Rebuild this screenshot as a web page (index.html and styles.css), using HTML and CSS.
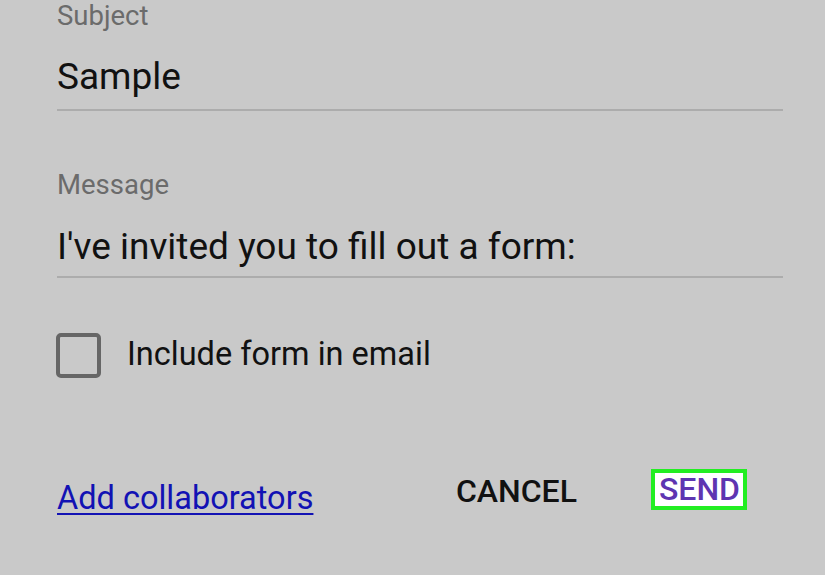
FILE: index.html
```html
<!DOCTYPE html>
<html lang="en">
<head>
<meta charset="utf-8">
<title>Send form</title>
<link rel="stylesheet" href="styles.css">
</head>
<body>
<div class="dialog">
  <div class="field field-subject">
    <div class="label">Subject</div>
    <div class="value">Sample</div>
  </div>
  <div class="field field-message">
    <div class="label">Message</div>
    <div class="value">I've invited you to fill out a form:</div>
  </div>
  <label class="check">
    <span class="box"></span>
    <span class="check-text">Include form in email</span>
  </label>
  <div class="actions">
    <a class="collab" href="#">Add collaborators</a>
    <div class="buttons">
      <span class="btn cancel">CANCEL</span>
      <span class="btn send">SEND</span>
    </div>
  </div>
</div>
</body>
</html>
```
FILE: styles.css
```css
html, body {
  margin: 0;
  padding: 0;
  background: #c9c9c9;
  width: 825px;
  height: 575px;
  overflow: hidden;
  font-family: Roboto, "Liberation Sans", sans-serif;
}

.dialog {
  padding: 0 42px 0 57px;
  display: flex;
  flex-direction: column;
}

.field {
  border-bottom: 2px solid #acacac;
}

.label {
  font-size: 27.5px;
  color: #6b6b6b;
  line-height: 32px;
}

.value {
  font-size: 37px;
  color: #111;
  line-height: 44px;
}

.field-subject .label {
  margin-bottom: 23px;
}
.field-subject .value {
  padding-bottom: 10px;
}

.field-message {
  margin-top: 58px;
}
.field-message .label {
  margin-bottom: 24px;
}
.field-message .value {
  padding-bottom: 7px;
}

.check {
  display: flex;
  align-items: center;
  gap: 26px;
  margin-top: 55px;
  margin-left: -1px;
}

.box {
  width: 37px;
  height: 37px;
  border: 4px solid #666;
  border-radius: 5px;
}

.check-text {
  font-size: 32.5px;
  line-height: 38px;
  color: #111;
  margin-bottom: 3px;
}

.actions {
  display: flex;
  align-items: flex-start;
  justify-content: space-between;
  margin-top: 91px;
  margin-right: 36px;
}

.collab {
  font-size: 32.5px;
  line-height: 38px;
  color: #1212b4;
  text-decoration: underline;
  text-decoration-thickness: 2px;
  text-underline-offset: 4px;
  margin-top: 10px;
}

.buttons {
  display: flex;
  align-items: flex-start;
  gap: 74px;
}

.btn {
  font-size: 32px;
  font-weight: 500;
  line-height: 33px;
}

.cancel {
  color: #111;
  margin-top: 6px;
}

.send {
  color: #5e35b1;
  background: #fff;
  border: 4px solid #22ee22;
  padding: 0 3px 0 4px;
}
```
